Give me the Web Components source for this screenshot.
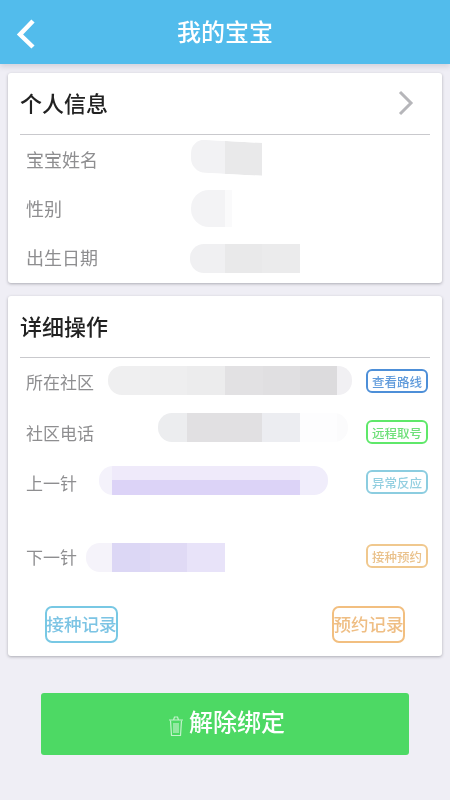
<!DOCTYPE html>
<html lang="zh">
<head>
<meta charset="utf-8">
<title>我的宝宝</title>
<style>
  html, body { margin: 0; background: #efeef5; }
  body { font-family: "Noto Sans CJK SC", "Liberation Sans", sans-serif; }
</style>
</head>
<body>
<baby-page></baby-page>
<script>
class BabyPage extends HTMLElement {
  constructor() {
    super();
    this.attachShadow({mode: 'open'});
    this.shadowRoot.innerHTML = `
      <style>
        :host { display: block; width: 450px; height: 800px; overflow: hidden; background: #efeef5; filter: blur(.45px); }
        .cards { display: flex; flex-direction: column; gap: 13px; padding: 9px 8px 0; }
        .pair { display: flex; justify-content: space-between; padding: 35px 37px 13px 37px; }
        .tall { height: 148px; display: grid; grid-template-rows: 1fr 1fr 1fr; }
        .ops { display: flex; flex-direction: column; padding-top: 8px; }
        .action { display: flex; justify-content: center; padding-top: 37px; }
      </style>
      <top-bar>我的宝宝</top-bar>
      <div class="cards">
        <info-card title-text="个人信息" arrow>
          <div class="tall">
            <info-row label="宝宝姓名" left="93">
              <mosaic-bar width="71" height="33" shift="-2" skew="3" cells="34:#f2f2f4 37:#e9e9ea"></mosaic-bar>
            </info-row>
            <info-row label="性别" left="129">
              <mosaic-bar width="41" height="37" shift="0" radius="18" cells="34:#f3f3f5 7:#fafafb"></mosaic-bar>
            </info-row>
            <info-row label="出生日期" left="92">
              <mosaic-bar width="110" height="29" shift="0" cells="35:#f0f0f2 37:#e9e9ea 38:#ebebec"></mosaic-bar>
            </info-row>
          </div>
        </info-card>
        <info-card title-text="详细操作">
          <div class="ops">
            <op-row label="所在社区" left="14" action="查看路线" color="#4d8fd8" text-color="#5f9adb">
              <mosaic-bar width="244" height="29" shift="-1" round-right cells="42:#efeff0 37:#eeeeef 38:#ececed 38:#e2e1e3 37:#e0dfe1 37:#dcdbdd 15:#f1f0f3"></mosaic-bar>
            </op-row>
            <op-row label="社区电话" left="64" action="远程取号" color="#5fe86a" text-color="#6fe07a" gap="21">
              <mosaic-bar width="190" height="29" shift="-5" round-right cells="29:#ecedef 75:#e1e0e2 38:#ecedf1 37:#fdfdfe 11:#fbfbfc"></mosaic-bar>
            </op-row>
            <op-row label="上一针" left="22" action="异常反应" color="#8ccde0" text-color="#93cfe0" gap="20">
              <mosaic-bar width="229" height="29" shift="-2" round-right cells="13:#f4f2fb 188:#efeafa/#dcd3f7 28:#f0edfb"></mosaic-bar>
            </op-row>
            <op-row label="下一针" left="9" action="接种预约" color="#f0c88e" text-color="#eac28c" gap="44">
              <mosaic-bar width="139" height="29" shift="1" cells="26:#f5f3fa 38:#dcd7f5 37:#e0daf5 38:#e8e3f9"></mosaic-bar>
            </op-row>
          </div>
          <div class="pair">
            <record-button color="#78c8e4" text-color="#7cc4e4">接种记录</record-button>
            <record-button color="#f2bf80" text-color="#efbe84">预约记录</record-button>
          </div>
        </info-card>
      </div>
      <div class="action"><unbind-button>解除绑定</unbind-button></div>
    `;
  }
}
customElements.define('baby-page', BabyPage);

class TopBar extends HTMLElement {
  constructor() {
    super();
    this.attachShadow({mode: 'open'});
    this.shadowRoot.innerHTML = `
      <style>
        :host { display: block; position: relative; height: 64px; background: #52bcec; box-shadow: 0 3px 5px rgba(120,120,140,.22); }
        .bar { display: flex; align-items: center; justify-content: center; height: 64px; box-sizing: border-box; padding-bottom: 4px; color: #fff; font-size: 24px; font-weight: 500; }
        svg { position: absolute; left: 13px; top: 16px; }
      </style>
      <svg width="24" height="36" viewBox="0 0 24 36"><path d="M20 5 L7 18.5 L20 31" fill="none" stroke="#fff" stroke-width="4.5"/></svg>
      <div class="bar"><slot></slot></div>
    `;
  }
}
customElements.define('top-bar', TopBar);

class InfoCard extends HTMLElement {
  constructor() {
    super();
    this.attachShadow({mode: 'open'});
    this.shadowRoot.innerHTML = `
      <style>
        :host { display: block; background: #fff; border-radius: 3px; box-shadow: 0 1px 3px rgba(90,90,100,.45); }
        .head {
          display: flex; align-items: center; justify-content: space-between; height: 62px; margin: 0 12px;
          padding: 0 16px 4px 0; border-bottom: 1.5px solid #c9c9cd; font-size: 22px; font-weight: 500; color: #222; box-sizing: border-box;
        }
        svg { display: none; margin-top: 3px; }
        :host([arrow]) svg { display: block; }
      </style>
      <div class="head">
        <span class="t"></span>
        <svg width="16" height="26" viewBox="0 0 16 26"><path d="M2 2 L13 13 L2 24" fill="none" stroke="#b6b6ba" stroke-width="3"/></svg>
      </div>
      <slot></slot>
    `;
    this.shadowRoot.querySelector('.t').textContent = this.getAttribute('title-text');
  }
}
customElements.define('info-card', InfoCard);

class InfoRow extends HTMLElement {
  constructor() {
    super();
    this.attachShadow({mode: 'open'});
    this.shadowRoot.innerHTML = `
      <style>
        :host { display: flex; align-items: center; padding-left: 18px; font-size: 18px; color: #8e8e90; }
        .l { white-space: nowrap; padding-bottom: 2px; }
      </style>
      <span class="l"></span><span class="v"><slot></slot></span>
    `;
    this.shadowRoot.querySelector('.l').textContent = this.getAttribute('label');
    this.shadowRoot.querySelector('.v').style.marginLeft = this.getAttribute('left') + 'px';
  }
}
customElements.define('info-row', InfoRow);

class OpRow extends HTMLElement {
  constructor() {
    super();
    this.attachShadow({mode: 'open'});
    this.shadowRoot.innerHTML = `
      <style>
        :host { display: flex; align-items: center; height: 30px; padding: 0 14px 0 18px; font-size: 17px; color: #8e8e90; }
        .l { white-space: nowrap; }
        .v { flex: 1; }
        .b {
          width: 62px; height: 24px; box-sizing: border-box; border: 2px solid; border-radius: 6px;
          display: flex; align-items: center; justify-content: center; font-size: 12.5px; font-weight: 500; white-space: nowrap;
        }
      </style>
      <span class="l"></span><span class="v"><slot></slot></span><span class="b"></span>
    `;
    const sr = this.shadowRoot;
    sr.querySelector('.l').textContent = this.getAttribute('label');
    sr.querySelector('.v').style.marginLeft = this.getAttribute('left') + 'px';
    const b = sr.querySelector('.b');
    b.textContent = this.getAttribute('action');
    b.style.borderColor = this.getAttribute('color');
    b.style.color = this.getAttribute('text-color');
    this.style.marginTop = (this.getAttribute('gap') || 0) + 'px';
  }
}
customElements.define('op-row', OpRow);

// the grey and lilac blocks that cover private values in the screenshot
class MosaicBar extends HTMLElement {
  constructor() {
    super();
    this.attachShadow({mode: 'open'});
    this.shadowRoot.innerHTML = `
      <style>
        :host { display: block; overflow: hidden; }
        .c { display: flex; height: 100%; }
        .c div { height: 100%; }
      </style>
      <div class="c"></div>
    `;
    const r = this.getAttribute('radius') || 14;
    this.style.width = this.getAttribute('width') + 'px';
    this.style.height = this.getAttribute('height') + 'px';
    this.style.borderRadius = this.hasAttribute('round-right') ? r + 'px' : r + 'px 0 0 ' + r + 'px';
    const shift = Number(this.getAttribute('shift') || 0);
    const skew = this.getAttribute('skew') || 0;
    this.style.transform = `translateY(${shift}px) skewY(${skew}deg)`;
    const box = this.shadowRoot.querySelector('.c');
    this.getAttribute('cells').split(' ').forEach(cell => {
      const [w, colors] = cell.split(':');
      const [top, bottom] = colors.split('/');
      const d = document.createElement('div');
      d.style.width = w + 'px';
      d.style.background = bottom ? `linear-gradient(${top} 48%, ${bottom} 48%)` : top;
      box.appendChild(d);
    });
  }
}
customElements.define('mosaic-bar', MosaicBar);

class RecordButton extends HTMLElement {
  constructor() {
    super();
    this.attachShadow({mode: 'open'});
    this.shadowRoot.innerHTML = `
      <style>
        :host {
          display: flex; align-items: center; justify-content: center; width: 73px; height: 37px; padding-bottom: 2px;
          box-sizing: border-box; border: 2px solid; border-radius: 7px; font-size: 17.5px; font-weight: 500; white-space: nowrap;
        }
      </style>
      <slot></slot>
    `;
    this.style.borderColor = this.getAttribute('color');
    this.style.color = this.getAttribute('text-color');
  }
}
customElements.define('record-button', RecordButton);

class UnbindButton extends HTMLElement {
  constructor() {
    super();
    this.attachShadow({mode: 'open'});
    this.shadowRoot.innerHTML = `
      <style>
        :host {
          display: flex; align-items: center; justify-content: center; gap: 5px; width: 368px; height: 62px;
          background: #4dd964; border-radius: 3px; color: #fff; font-size: 24px; font-weight: 500; padding: 0 0 0 3px; box-sizing: border-box;
        }
        svg { margin-top: 4px; }
        span { padding-bottom: 8px; }
      </style>
      <svg width="16" height="22" viewBox="0 0 16 22" fill="none" stroke="#c4f2cc" stroke-width="1.2">
        <path d="M1 5 H15 M5.5 5 L6.5 2 H9.5 L10.5 5"/>
        <path d="M2.5 5.5 L3.5 20.5 H12.5 L13.5 5.5 M6 8 V18 M8 8 V18 M10 8 V18"/>
      </svg>
      <span><slot></slot></span>
    `;
  }
}
customElements.define('unbind-button', UnbindButton);
</script>
</body>
</html>
